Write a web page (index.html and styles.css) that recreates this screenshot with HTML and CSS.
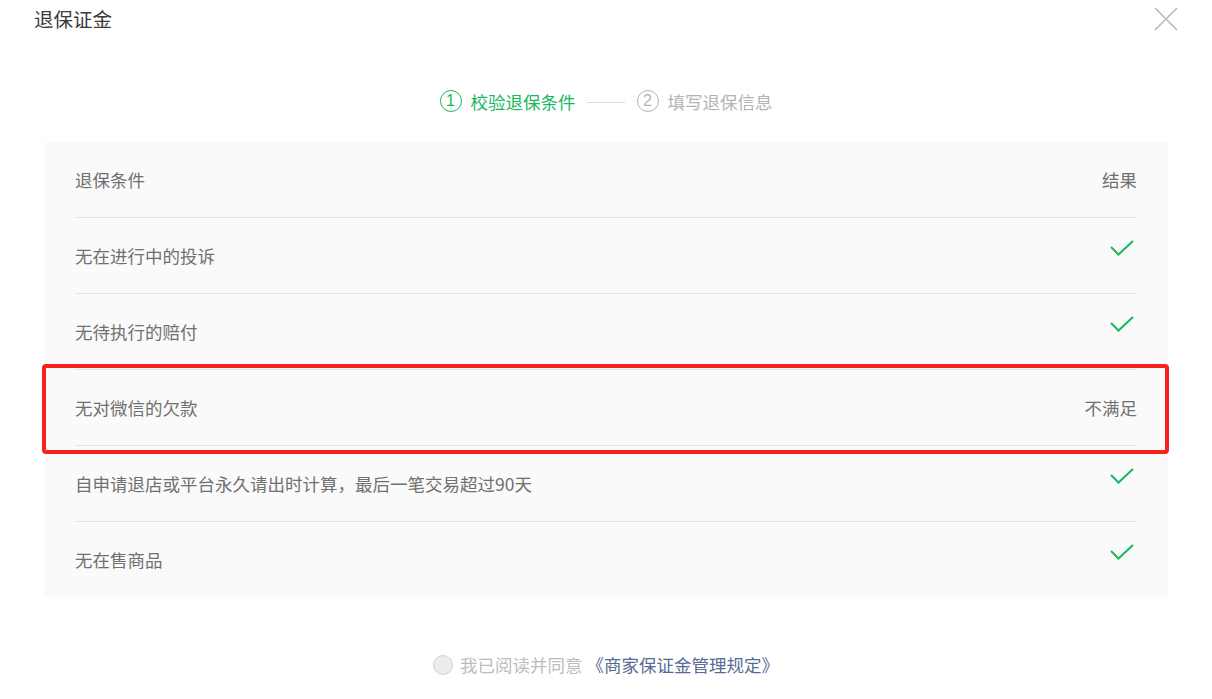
FILE: index.html
```html
<!DOCTYPE html>
<html>

<head>
    <title>退保证金</title>
    <link rel="stylesheet" href="styles.css">
</head>
<body>
    <div class="dlg-head">
        <h1 class="dlg-title">退保证金</h1>
        <svg class="dlg-close" width="24" height="24" viewBox="0 0 24 24">
            <path d="M1 1 L23 23 M23 1 L1 23" stroke="#b8b8b8" stroke-width="1.6" fill="none"/>
        </svg>
    </div>

    <div class="steps">
        <span class="step step-on"><span class="step-num">1</span>校验退保条件</span>
        <span class="step-line"></span>
        <span class="step"><span class="step-num">2</span>填写退保信息</span>
    </div>

    <div class="cond-panel">
        <div class="cond-row cond-head">
            <span class="cond-name">退保条件</span>
            <span class="cond-res">结果</span>
        </div>
        <div class="cond-row">
            <span class="cond-name">无在进行中的投诉</span>
            <svg class="cond-ok" width="24" height="16" viewBox="0 0 24 16"><path d="M1 7 L8.5 14.5 L23 1" stroke="#17b960" stroke-width="2" fill="none"/></svg>
        </div>
        <div class="cond-row">
            <span class="cond-name">无待执行的赔付</span>
            <svg class="cond-ok" width="24" height="16" viewBox="0 0 24 16"><path d="M1 7 L8.5 14.5 L23 1" stroke="#17b960" stroke-width="2" fill="none"/></svg>
        </div>
        <div class="cond-row cond-fail">
            <span class="cond-name">无对微信的欠款</span>
            <span class="cond-res">不满足</span>
        </div>
        <div class="cond-row">
            <span class="cond-name">自申请退店或平台永久请出时计算，最后一笔交易超过90天</span>
            <svg class="cond-ok" width="24" height="16" viewBox="0 0 24 16"><path d="M1 7 L8.5 14.5 L23 1" stroke="#17b960" stroke-width="2" fill="none"/></svg>
        </div>
        <div class="cond-row">
            <span class="cond-name">无在售商品</span>
            <svg class="cond-ok" width="24" height="16" viewBox="0 0 24 16"><path d="M1 7 L8.5 14.5 L23 1" stroke="#17b960" stroke-width="2" fill="none"/></svg>
        </div>
    </div>

    <div class="agree">
        <span class="agree-box"></span>
        <span class="agree-text">我已阅读并同意</span>
        <a class="agree-link" href="#">《商家保证金管理规定》</a>
    </div>
</body>

</html>
```

FILE: styles.css
```css
body {
    margin: 0;
    font-family: "Noto Sans CJK SC", "Liberation Sans", sans-serif;
    background: #fff;
}

/* dialog head */
.dlg-head {
    display: flex;
    justify-content: space-between;
    align-items: center;
    height: 37px;
    padding: 0 34px;
}
.dlg-title {
    margin: 0;
    font-size: 19.5px;
    font-weight: normal;
    color: #3a3a3a;
}

/* steps */
.steps {
    display: flex;
    justify-content: center;
    align-items: center;
    height: 24px;
    margin-top: 52px;
    font-size: 17.5px;
    color: #b4b4b4;
}
.step {
    display: flex;
    align-items: center;
}
.step-num {
    display: inline-flex;
    justify-content: center;
    align-items: center;
    box-sizing: border-box;
    width: 22px;
    height: 22px;
    margin-right: 9px;
    border: 1.5px solid #b4b4b4;
    border-radius: 50%;
    font-family: "Liberation Sans", sans-serif;
    font-size: 16px;
    line-height: 1;
}
.step-on {
    color: #17b960;
}
.step-on .step-num {
    border-color: #17b960;
}
.step-line {
    width: 38px;
    height: 1px;
    margin: 2px 12px 0 11px;
    background: #d9d9d9;
}

/* conditions */
.cond-panel {
    margin: 29px 44px 0;
    padding: 0 31px;
    background: #fafafa;
}
.cond-row {
    position: relative;
    display: flex;
    justify-content: space-between;
    align-items: center;
    height: 75px;
    border-top: 1px solid #e4e4e4;
    font-size: 17.5px;
    color: #707070;
}
.cond-name {
    margin-top: -1px;
}
.cond-res {
    margin-top: -1px;
}
.cond-head {
    border-top: none;
}
.cond-ok {
    margin: 0 3px 16px 0;
}
.cond-fail::after {
    content: "";
    position: absolute;
    top: -6px;
    bottom: -9px;
    left: -33px;
    right: -32px;
    border: 4px solid #f5231b;
    border-radius: 4px;
}

/* agreement */
.agree {
    display: flex;
    justify-content: center;
    align-items: center;
    margin-top: 55px;
    font-size: 17.5px;
}
.agree-box {
    box-sizing: border-box;
    width: 20px;
    height: 20px;
    margin-right: 7px;
    border: 1px solid #d2d2d2;
    border-radius: 50%;
    background: #ececec;
}
.agree-text {
    color: #bdbdbd;
}
.agree-link {
    margin-left: 4px;
    color: #576b95;
    text-decoration: none;
}
```
